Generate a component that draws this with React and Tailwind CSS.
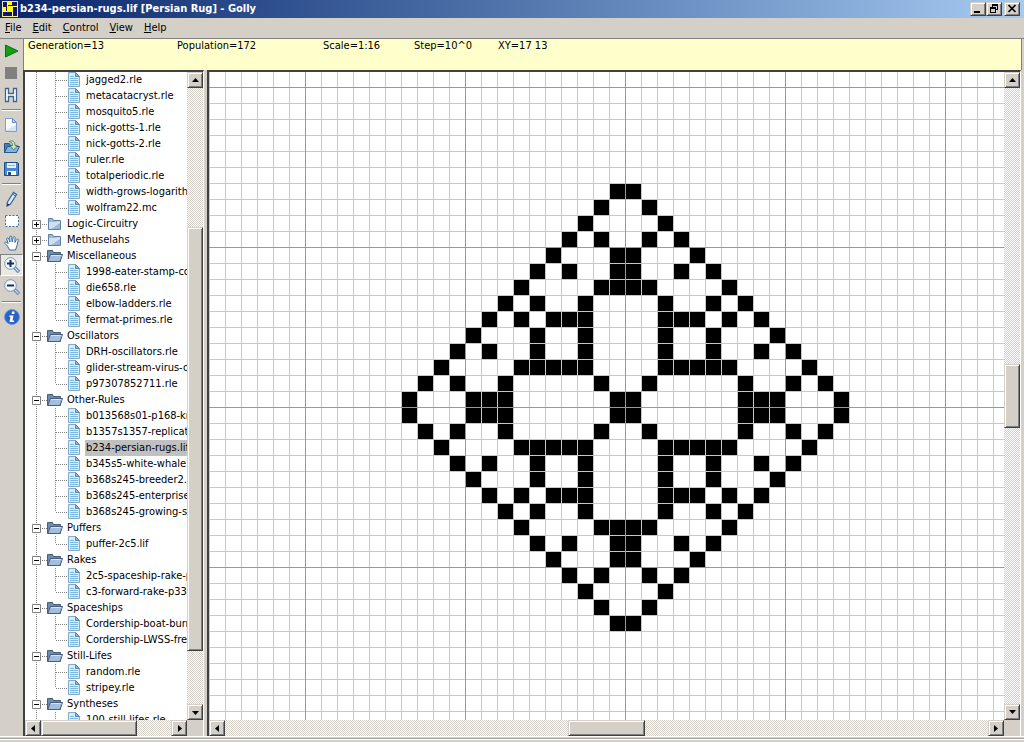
import { useState } from "react";

// left half of the upper half of the rug, the rest is mirrored
const QUARTER = [
  [13],
  [12],
  [11],
  [10, 12],
  [9, 13],
  [8, 10, 13],
  [7, 12, 13],
  [6, 8, 11],
  [5, 7, 9, 10, 11],
  [4, 8, 11],
  [3, 5, 8, 11],
  [2, 7, 8, 9, 10, 11],
  [1, 3, 6, 12],
  [0, 4, 5, 6, 13],
];

const CELLS = QUARTER.flatMap((cols, y) =>
  cols.flatMap((x) => [
    [x, y],
    [27 - x, y],
    [x, 27 - y],
    [27 - x, 27 - y],
  ])
);

const TREE = [
  {
    files: [
      "jagged2.rle",
      "metacatacryst.rle",
      "mosquito5.rle",
      "nick-gotts-1.rle",
      "nick-gotts-2.rle",
      "ruler.rle",
      "totalperiodic.rle",
      "width-grows-logarithm",
      "wolfram22.mc",
    ],
  },
  { folder: "Logic-Circuitry", files: [] },
  { folder: "Methuselahs", files: [] },
  {
    folder: "Miscellaneous",
    files: [
      "1998-eater-stamp-co",
      "die658.rle",
      "elbow-ladders.rle",
      "fermat-primes.rle",
    ],
  },
  {
    folder: "Oscillators",
    files: ["DRH-oscillators.rle", "glider-stream-virus-o", "p97307852711.rle"],
  },
  {
    folder: "Other-Rules",
    files: [
      "b013568s01-p168-kn",
      "b1357s1357-replicato",
      "b234-persian-rugs.lif",
      "b345s5-white-whale.",
      "b368s245-breeder2.r",
      "b368s245-enterprise",
      "b368s245-growing-sh",
    ],
  },
  { folder: "Puffers", files: ["puffer-2c5.lif"] },
  { folder: "Rakes", files: ["2c5-spaceship-rake-p", "c3-forward-rake-p33"] },
  {
    folder: "Spaceships",
    files: ["Cordership-boat-burn", "Cordership-LWSS-fre"],
  },
  { folder: "Still-Lifes", files: ["random.rle", "stripey.rle"] },
  { folder: "Syntheses", files: ["100-still-lifes.rle"] },
];

const RAISED =
  "border border-t-[#d4d0c8] border-l-[#d4d0c8] border-r-[#404040] border-b-[#404040] bg-[#d4d0c8] shadow-[inset_1px_1px_#fff,inset_-1px_-1px_#808080]";

const TRACK =
  "bg-[repeating-conic-gradient(#d4d0c8_0_25%,#ffffff_0_50%)] bg-[length:2px_2px]";

const ARROWS = {
  up: "M4 9h7L7.500 5z",
  down: "M4 6h7l-3.500 4z",
  left: "M9 4v7L5 7.500z",
  right: "M6 4v7l4-3.500z",
};

const Arrow = ({ dir }) => (
  <button
    aria-label={`Scroll ${dir}`}
    className={`flex h-4 w-4 shrink-0 items-center justify-center ${RAISED}`}
  >
    <svg viewBox="0 0 15 15" className="h-[15px] w-[15px] shrink-0">
      <path d={ARROWS[dir]} />
    </svg>
  </button>
);

const VScroll = ({ before, thumb, after }) => (
  <div className={`flex w-4 shrink-0 flex-col ${TRACK}`}>
    <Arrow dir="up" />
    <div className={before} />
    <div className={`${thumb} ${RAISED}`} />
    <div className={after} />
    <Arrow dir="down" />
  </div>
);

const HScroll = ({ before, thumb, after }) => (
  <div className="flex h-4 shrink-0">
    <div className={`flex grow ${TRACK}`}>
      <Arrow dir="left" />
      <div className={before} />
      <div className={`${thumb} ${RAISED}`} />
      <div className={after} />
      <Arrow dir="right" />
    </div>
    <div className="w-4 shrink-0 bg-[#d4d0c8]" />
  </div>
);

const Logo = () => (
  <svg viewBox="0 0 16 16" className="h-4 w-4" shapeRendering="crispEdges">
    <rect width="16" height="16" fill="#f0ec90" />
    <rect x="1" y="1" width="14" height="14" fill="#14146a" />
    <path d="M5 5h6v6H5z" fill="#ffff00" />
    <path d="M5 1h1v4H5zM11 5h4v1h-4zM10 11h1v4h-1zM1 10h4v1H1z" fill="#f8f4a0" />
    <path d="M6 1h4v3H6zM1 6h3v4H1z" fill="#ffff00" />
  </svg>
);

function TitleBar() {
  return (
    <header className="flex h-[18px] shrink-0 items-center bg-linear-to-r from-[#0a246a] to-[#a6caf0] pr-1 pl-0.5">
      <Logo />
      <h1 className="grow pl-0.5 leading-4 font-bold whitespace-nowrap text-white">
        b234-persian-rugs.lif [Persian Rug] - Golly
      </h1>
      <div className="flex">
        <button aria-label="Minimize" className={`h-3.5 w-4 ${RAISED}`}>
          <svg viewBox="0 0 14 12" className="h-3 w-3.5">
            <path d="M3 8h6v2H3z" />
          </svg>
        </button>
        <button aria-label="Restore" className={`h-3.5 w-4 ${RAISED}`}>
          <svg
            viewBox="0 0 14 12"
            className="h-3 w-3.5"
            shapeRendering="crispEdges"
          >
            <path
              d="M5 1h6v6H9V6h1V3H6v1H5zM3 4h6v6H3zM4 6v3h4V6z"
              fillRule="evenodd"
            />
          </svg>
        </button>
        <button aria-label="Close" className={`ml-0.5 h-3.5 w-4 ${RAISED}`}>
          <svg viewBox="0 0 14 12" className="h-3 w-3.5">
            <path d="M3.500 2l7 7M10.500 2l-7 7" stroke="#000" strokeWidth="1.700" />
          </svg>
        </button>
      </div>
    </header>
  );
}

const MenuBar = () => (
  <nav className="flex h-5 shrink-0 items-center gap-px">
    {["File", "Edit", "Control", "View", "Help"].map((name) => (
      <button key={name} className="px-[5px] leading-4">
        <span className="underline underline-offset-1">{name[0]}</span>
        {name.slice(1)}
      </button>
    ))}
  </nav>
);

const Magnifier = ({ plus }) => (
  <>
    <path d="M10 10l5 5" stroke="#5d87b8" strokeWidth="3.500" />
    <path d="M11 11l3.500 3.500" stroke="#c5dcf2" strokeWidth="1.300" />
    <circle cx="6.500" cy="6.500" r="5.800" fill="#f2f8ff" stroke="#6f97c4" />
    <path
      d={plus ? "M3 6.500h7M6.500 3v7" : "M3 6.500h7"}
      stroke="#1b2d55"
      strokeWidth="2"
    />
  </>
);

const TOOLS = [
  {
    name: "Start",
    icon: <path d="M1.500 2v12L14 8z" fill="#11a011" stroke="#0b6e14" />,
  },
  { name: "Stop", icon: <path d="M1 2h12v12H1z" fill="#808080" /> },
  {
    name: "Hyperspeed",
    icon: (
      <path
        d="M1.500 1.500h3v5h5v-5h3v13h-3v-5h-5v5h-3z"
        fill="#fff"
        stroke="#3d6594"
        strokeWidth="1.300"
      />
    ),
  },
  null,
  {
    name: "New",
    icon: (
      <>
        <path d="M1.500 1.500h7l4 4v9h-11z" fill="#d5e3f7" stroke="#7d9cc9" />
        <path d="M2 2h6v4h4v2L2 13z" fill="#f8fbff" />
        <path d="M8.500 1.500v4h4z" fill="#b4cdec" stroke="#6e90c0" />
      </>
    ),
  },
  {
    name: "Open",
    icon: (
      <>
        <path d="M.5 13.500v-9h5l1 2h6v7z" fill="#4a7db5" stroke="#28568c" />
        <path d="M.5 13.500l3-6h12l-3 6z" fill="#86b2e0" stroke="#28568c" />
        <path
          d="M5 2.500c4-1.500 6 0 6 4h2.500L9.800 11 6 6.500h2.500C8.500 4 7.500 3 5 2.500z"
          fill="#c9ebb5"
          stroke="#37746a"
          strokeWidth=".8"
        />
      </>
    ),
  },
  {
    name: "Save",
    icon: (
      <>
        <path d="M.5 1.500h13l1 1v12H.5z" fill="#4c86cc" stroke="#1f4c8c" />
        <path d="M3 2h9v5H3z" fill="#e4f0fc" />
        <path d="M4 4.500h7" stroke="#8fb4de" />
        <path d="M3 10h9v4H3z" fill="#fff" />
        <path d="M4 11h3v3H4z" fill="#1f4c8c" />
      </>
    ),
  },
  null,
  {
    name: "Draw",
    icon: (
      <>
        <path
          d="M3.500 11L9.500 1.500l3 2L6.500 13l-3.500 2z"
          fill="#e6f0fa"
          stroke="#3568a2"
          strokeWidth="1.300"
        />
        <path d="M8.500 3l3 2" stroke="#4272a8" />
        <path d="M3 15.200l.4-3 2.200 1.400z" fill="#1b2d55" />
      </>
    ),
  },
  {
    name: "Select",
    icon: (
      <path
        d="M1.500 2.500h13v11h-13z"
        fill="#fff"
        stroke="#3d6ea8"
        strokeDasharray="2 1.500"
      />
    ),
  },
  {
    name: "Move",
    icon: (
      <path
        d="M5.500 15l-2-4L.8 8.300c-.4-1.400 1-1.700 2-.8l1.400 1L2.700 4c0-1.400 1.500-1.500 2-.3L6 7 5.700 2c.2-1.400 1.800-1.400 2 0L8.200 7l1-4.600c.4-1.300 1.900-1 1.900.3L10.800 7.500l1.800-3c.8-1.100 2-.4 1.600.8L13 10.500 11.500 15z"
        fill="#fff"
        stroke="#3a6aa6"
      />
    ),
  },
  { name: "Zoom in", icon: <Magnifier plus /> },
  { name: "Zoom out", icon: <Magnifier /> },
  null,
  {
    name: "Info",
    icon: (
      <>
        <circle cx="8" cy="8" r="7.500" fill="#2b62c4" stroke="#6f9ae0" />
        <path
          d="M8 2.500h2.500V5H7.700zM5.500 6.500h4l-1 5H10V13H5.500l1-5h-1z"
          fill="#fff"
        />
      </>
    ),
  },
];

function Toolbar() {
  const [tool, setTool] = useState("Zoom in");

  return (
    <aside className="flex w-[23px] shrink-0 flex-col pt-px">
      {TOOLS.map((item, i) =>
        item ? (
          <button
            key={item.name}
            aria-label={item.name}
            onClick={() => setTool(item.name)}
            className={`flex h-[22px] items-center justify-center border ${
              tool === item.name
                ? "border-t-[#808080] border-r-white border-b-white border-l-[#808080] bg-[#eae8e3]"
                : "border-transparent"
            }`}
          >
            <svg viewBox="0 0 16 16" fill="none" className="h-4 w-4">
              {item.icon}
            </svg>
          </button>
        ) : (
          <div key={i} className="flex h-2 items-center px-0.5">
            <div className="grow border-t border-b border-t-[#808080] border-b-white" />
          </div>
        )
      )}
    </aside>
  );
}

const StatusBar = () => (
  <div className="mr-0.5 flex h-[31px] shrink-0 border-r border-l border-[#808080] bg-[#ffffcc] pl-1 whitespace-nowrap">
    <span className="w-[149px]">Generation=13</span>
    <span className="w-[146px]">Population=172</span>
    <span className="w-[91px]">Scale=1:16</span>
    <span className="w-[84px]">Step=10^0</span>
    <span>XY=17 13</span>
  </div>
);

const FolderIcon = ({ open }) => (
  <svg viewBox="0 0 16 16" className="h-4 w-4 shrink-0">
    {open ? (
      <>
        <path d="M.5 13.500v-11h5l1 2h7v9z" fill="#6d8aae" stroke="#44607f" />
        <path d="M.8 13.500l2.700-7h12l-2.500 7z" fill="#a3bedc" stroke="#44607f" />
        <path d="M4 7.500h10" stroke="#d6e4f3" />
      </>
    ) : (
      <>
        <path d="M1.500 13.500v-11h4l1 2h7v9z" fill="#9bb8d8" stroke="#5f80a6" />
        <path d="M2 13V6h5l6-1v2L4 13z" fill="#cfe0f2" />
      </>
    )}
  </svg>
);

const FileIcon = () => (
  <svg viewBox="0 0 12 16" className="h-4 w-3 shrink-0">
    <path d="M.5.500h7l4 4v10H.5z" fill="#d3ecfa" stroke="#83abc8" />
    <path d="M7.500.500v4h4z" fill="#7fb4d8" stroke="#5a8db5" />
    <path
      d="M2 4.500h4M2 6.500h8M2 8.500h8M2 10.500h8M2 12.500h8"
      stroke="#7dbbe2"
    />
  </svg>
);

function FolderRow({ name, open, onToggle }) {
  return (
    <button
      onClick={onToggle}
      aria-expanded={open}
      className="flex h-4 items-center leading-4 whitespace-nowrap"
    >
      <svg viewBox="0 0 22 16" fill="none" className="h-4 w-[22px] shrink-0">
        <path
          d="M11.500 0v16M17 8.500h5"
          stroke="#808080"
          strokeDasharray="1 1"
        />
        <path d="M7.500 4.500h8v8h-8z" fill="#fff" stroke="#808080" />
        <path d={open ? "M9 8.500h5" : "M9 8.500h5M11.500 6v5"} stroke="#000" />
      </svg>
      <FolderIcon open={open} />
      <span className="pl-1">{name}</span>
    </button>
  );
}

function FileRow({ name, last, selected, onSelect }) {
  return (
    <button
      onClick={onSelect}
      className="flex h-4 items-center leading-4 whitespace-nowrap"
    >
      <svg viewBox="0 0 43 16" fill="none" className="h-4 w-[43px] shrink-0">
        <path
          d={`M11.500 0v16M30.500 0v${last ? 8 : 16}M31 8.500h11`}
          stroke="#808080"
          strokeDasharray="1 1"
        />
      </svg>
      <FileIcon />
      <span className={`ml-[5px] px-px ${selected ? "bg-[#c0c0c0]" : ""}`}>
        {name}
      </span>
    </button>
  );
}

function PatternTree() {
  const [selected, setSelected] = useState("b234-persian-rugs.lif");
  const [closed, setClosed] = useState(["Logic-Circuitry", "Methuselahs"]);

  function toggle(folder) {
    setClosed(
      closed.includes(folder)
        ? closed.filter((f) => f !== folder)
        : [...closed, folder]
    );
  }

  return (
    <section className="flex w-[181px] shrink-0 flex-col border-t-2 border-r border-l-2 border-t-[#404040] border-r-white border-l-[#404040]">
      <div className="flex min-h-0 grow">
        <div className="flex min-w-0 grow flex-col overflow-hidden bg-white">
          {TREE.map(({ folder, files }, i) => {
            const open = !closed.includes(folder);
            return (
              <div key={i} className="flex shrink-0 flex-col">
                {folder && (
                  <FolderRow
                    name={folder}
                    open={open}
                    onToggle={() => toggle(folder)}
                  />
                )}
                {open &&
                  files.map((file, j) => (
                    <FileRow
                      key={file}
                      name={file}
                      last={folder !== "Syntheses" && j === files.length - 1}
                      selected={file === selected}
                      onSelect={() => setSelected(file)}
                    />
                  ))}
              </div>
            );
          })}
        </div>
        <VScroll before="flex-[139]" thumb="flex-[424]" after="flex-[53]" />
      </div>
      <HScroll before="flex-none" thumb="flex-[95]" after="flex-[35]" />
    </section>
  );
}

const Universe = () => (
  <svg className="block h-full w-full" shapeRendering="crispEdges">
    <defs>
      <pattern
        id="thin"
        x="1"
        width="16"
        height="16"
        patternUnits="userSpaceOnUse"
      >
        <path d="M15 0h1v16h-1zM0 15h16v1H0z" fill="#c8c8c8" />
      </pattern>
      <pattern
        id="bold"
        x="97"
        y="16"
        width="160"
        height="160"
        patternUnits="userSpaceOnUse"
      >
        <path d="M159 0h1v160h-1zM0 159h160v1H0z" fill="#989898" />
      </pattern>
    </defs>
    <rect width="100%" height="100%" fill="#fff" />
    <rect width="100%" height="100%" fill="url(#thin)" />
    <rect width="100%" height="100%" fill="url(#bold)" />
    {CELLS.map(([x, y]) => (
      <rect
        key={`${x},${y}`}
        x={193 + x * 16}
        y={112 + y * 16}
        width="15"
        height="15"
      />
    ))}
  </svg>
);

const Viewport = () => (
  <main className="flex min-w-0 grow flex-col border-t-2 border-r border-l-2 border-t-[#404040] border-r-white border-l-[#404040]">
    <div className="flex min-h-0 grow">
      <div className="min-w-0 grow overflow-hidden">
        <Universe />
      </div>
      <VScroll before="flex-[277]" thumb="flex-[62]" after="flex-[277]" />
    </div>
    <HScroll before="flex-[344]" thumb="flex-[75]" after="flex-[344]" />
  </main>
);

export default () => {
  return (
    <div className="flex h-screen flex-col overflow-hidden bg-[#d4d0c8] font-['DejaVu_Sans_Condensed','DejaVu_Sans',sans-serif] text-[11px] leading-[14px] text-black">
      <TitleBar />
      <MenuBar />
      <div className="flex min-h-0 grow border-t border-[#808080]">
        <Toolbar />
        <div className="flex min-w-0 grow flex-col">
          <StatusBar />
          <div className="flex min-h-0 grow gap-[3px] pr-[3px]">
            <PatternTree />
            <Viewport />
          </div>
        </div>
      </div>
      <footer className="h-1.5 shrink-0 border-t border-white">
        <div className="mt-px border-t border-b border-t-[#a8a49c] border-b-white" />
      </footer>
    </div>
  );
};
